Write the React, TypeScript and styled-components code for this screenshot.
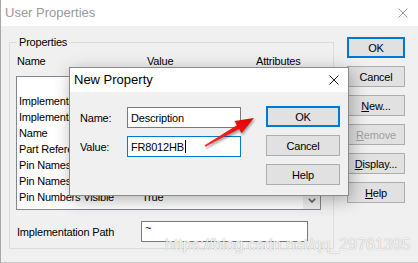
import React from "react";
import styled, { createGlobalStyle, css } from "styled-components";

const GlobalStyle = createGlobalStyle`
	html, body {
		margin: 0;
		padding: 0;
		background: #f0f0f0;
	}
	body {
		font-family: "Liberation Sans", Arial, sans-serif;
		font-size: 11px;
		letter-spacing: -0.2px;
		color: #000;
	}
`;

type PropertyRow = { name: string; value?: string };

const rows: PropertyRow[] = [
	{ name: "" },
	{ name: "Implementation" },
	{ name: "Implementation" },
	{ name: "Name" },
	{ name: "Part Reference" },
	{ name: "Pin Names" },
	{ name: "Pin Names" },
	{ name: "Pin Numbers Visible", value: "True" },
];

const CloseGlyph: React.FC<{ color: string }> = ({ color }) => (
	<CloseSvg viewBox="0 0 10 10" width={10} height={10}>
		<path d="M0.5 0.5 L9.5 9.5 M9.5 0.5 L0.5 9.5" stroke={color} strokeWidth={1} fill="none" />
	</CloseSvg>
);

const RedArrow: React.FC = () => (
	<ArrowSvg viewBox="0 0 60 40" width={60} height={40}>
		<defs>
			<linearGradient id="arrowFill" x1="0" y1="1" x2="1" y2="0">
				<stop offset="0" stopColor="#ff3030" />
				<stop offset="1" stopColor="#e00000" />
			</linearGradient>
		</defs>
		<polygon
			points="6.4,34.7 40.1,17 42.5,21.2 55,6 35.5,9 37.9,13.2 5.6,33.3"
			fill="url(#arrowFill)"
		/>
	</ArrowSvg>
);

const App: React.FC = () => {
	return (
		<>
			<GlobalStyle />
			<Window>
				<TitleBar>
					<TitleText $inactive>User Properties</TitleText>
					<CloseGlyph color="#9a9a9a" />
				</TitleBar>
				<Client>
					<GroupBox>
						<Legend>Properties</Legend>
						<ColumnHeaders>
							<HeaderCell $width={130}>Name</HeaderCell>
							<HeaderCell $width={109}>Value</HeaderCell>
							<HeaderCell>Attributes</HeaderCell>
						</ColumnHeaders>
						<ListBox>
							<Rows>
								{rows.map((row, i) => (
									<Row key={i}>
										<NameCell>{row.name}</NameCell>
										<span>{row.value ?? ""}</span>
									</Row>
								))}
							</Rows>
							<ScrollBar>
								<ScrollArrow>
									<svg viewBox="0 0 8 5" width={8} height={5}>
										<polyline points="0.8,0.8 4,4 7.2,0.8" stroke="#606060" strokeWidth={1.6} fill="none" />
									</svg>
								</ScrollArrow>
							</ScrollBar>
						</ListBox>
						<PathRow>
							<PathLabel>Implementation Path</PathLabel>
							<PathInput>~</PathInput>
						</PathRow>
					</GroupBox>
					<ButtonColumn>
						<PushButton $default>OK</PushButton>
						<PushButton>Cancel</PushButton>
						<PushButton>
							<u>N</u>ew...
						</PushButton>
						<PushButton $disabled>
							<u>R</u>emove
						</PushButton>
						<PushButton>
							<u>D</u>isplay...
						</PushButton>
						<PushButton>
							<u>H</u>elp
						</PushButton>
					</ButtonColumn>
				</Client>

				<Dialog>
					<DialogTitleBar>
						<TitleText>New Property</TitleText>
						<CloseGlyph color="#1a1a1a" />
					</DialogTitleBar>
					<DialogBody>
						<FormColumn>
							<FieldRow>
								<FieldLabel>Name:</FieldLabel>
								<FieldInput>Description</FieldInput>
							</FieldRow>
							<FieldRow>
								<FieldLabel>Value:</FieldLabel>
								<FieldInput $focused>
									FR8012HB<Caret />
								</FieldInput>
							</FieldRow>
						</FormColumn>
						<DialogButtons>
							<DialogButton $default>OK</DialogButton>
							<DialogButton>Cancel</DialogButton>
							<DialogButton>Help</DialogButton>
						</DialogButtons>
					</DialogBody>
				</Dialog>

				<RedArrow />
				<Watermark>https://blog.csdn.net/qq_29761395</Watermark>
			</Window>
		</>
	);
};

export default App;

const Window = styled.div`
	position: relative;
	width: 418px;
	height: 263px;
	box-sizing: border-box;
	overflow: hidden;
	background: #f0f0f0;
	border-left: 1px solid #a8a8a8;
	border-bottom: 1px solid #c8c8c8;
`;

const TitleBar = styled.div`
	height: 26px;
	background: #fff;
	display: flex;
	align-items: center;
	justify-content: space-between;
	padding: 0 10px 0 4px;
`;

const TitleText = styled.span<{ $inactive?: boolean }>`
	font-size: 13px;
	letter-spacing: 0;
	color: ${(p) => (p.$inactive ? "#999" : "#000")};
	line-height: 16px;
`;

const CloseSvg = styled.svg`
	display: block;
`;

const Client = styled.div`
	display: flex;
	align-items: flex-start;
	padding: 11px 0 0 8px;
`;

const GroupBox = styled.div`
	box-sizing: border-box;
	width: 325px;
	height: 207px;
	margin-top: 5px;
	border: 1px solid #dcdcdc;
`;

const Legend = styled.div`
	width: fit-content;
	margin: -7px 0 0 7px;
	padding: 0 2px;
	line-height: 13px;
	background: #f0f0f0;
`;

const ColumnHeaders = styled.div`
	display: flex;
	margin-top: 6px;
	padding-left: 7px;
	line-height: 13px;
`;

const HeaderCell = styled.span<{ $width?: number }>`
	${(p) =>
		p.$width &&
		css`
			width: ${p.$width}px;
		`}
	flex: none;
`;

const ListBox = styled.div`
	box-sizing: border-box;
	display: flex;
	width: 305px;
	height: 134px;
	margin: 8px 0 0 6px;
	border: 1px solid #828790;
	background: #fff;
`;

const Rows = styled.div`
	flex: 1;
	padding-left: 2px;
`;

const Row = styled.div`
	display: grid;
	grid-template-columns: 123px 1fr;
	height: 16px;
	line-height: 16px;
	white-space: nowrap;
`;

const NameCell = styled.span`
	overflow: hidden;
`;

const ScrollBar = styled.div`
	width: 17px;
	background: #f0f0f0;
	display: flex;
	flex-direction: column;
	justify-content: flex-end;
`;

const ScrollArrow = styled.div`
	height: 17px;
	display: flex;
	align-items: center;
	justify-content: center;
`;

const PathRow = styled.div`
	display: flex;
	align-items: center;
	margin-top: 11px;
	padding-left: 7px;
`;

const PathLabel = styled.span`
	width: 124px;
	flex: none;
`;

const inputBox = css`
	box-sizing: border-box;
	background: #fff;
	border: 1px solid #7a7a7a;
	white-space: nowrap;
`;

const PathInput = styled.div`
	${inputBox}
	width: 167px;
	height: 21px;
	padding: 0 3px;
	line-height: 12px;
`;

const ButtonColumn = styled.div`
	display: flex;
	flex-direction: column;
	gap: 8px;
	margin-left: 13px;
	width: 58px;
`;

const buttonFace = css<{ $default?: boolean; $disabled?: boolean }>`
	box-sizing: border-box;
	height: 21px;
	display: flex;
	align-items: center;
	justify-content: center;
	background: #e1e1e1;
	border: ${(p) => (p.$default ? "2px solid #0078d7" : "1px solid #adadad")};
	color: ${(p) => (p.$disabled ? "#a0a0a0" : "#000")};
	white-space: nowrap;
`;

const PushButton = styled.div<{ $default?: boolean; $disabled?: boolean }>`
	${buttonFace}
`;

const Dialog = styled.div`
	position: absolute;
	left: 68px;
	top: 67px;
	width: 280px;
	height: 129px;
	box-sizing: border-box;
	border: 1px solid #8a8a8a;
	background: #f0f0f0;
	box-shadow: 2px 4px 16px rgba(0, 0, 0, 0.3);
`;

const DialogTitleBar = styled.div`
	height: 24px;
	background: #fff;
	display: flex;
	align-items: center;
	justify-content: space-between;
	padding: 0 9px 0 4px;
`;

const DialogBody = styled.div`
	display: flex;
	align-items: flex-start;
	padding: 14px 0 0 10px;
`;

const FormColumn = styled.div`
	display: flex;
	flex-direction: column;
	gap: 8px;
	margin-top: 1px;
`;

const FieldRow = styled.div`
	display: flex;
	align-items: center;
`;

const FieldLabel = styled.span`
	width: 47px;
	flex: none;
`;

const FieldInput = styled.div<{ $focused?: boolean }>`
	${inputBox}
	width: 114px;
	height: 21px;
	padding-left: 3px;
	display: flex;
	align-items: center;
	border-color: ${(p) => (p.$focused ? "#0078d7" : "#7a7a7a")};
`;

const Caret = styled.span`
	display: inline-block;
	width: 1px;
	height: 13px;
	background: #000;
	margin-left: 1px;
`;

const DialogButtons = styled.div`
	display: flex;
	flex-direction: column;
	gap: 8px;
	margin-left: 25px;
	width: 74px;
`;

const DialogButton = styled.div<{ $default?: boolean }>`
	${buttonFace}
`;

const ArrowSvg = styled.svg`
	position: absolute;
	left: 198px;
	top: 112px;
	filter: drop-shadow(1px 2px 1px rgba(0, 0, 0, 0.35));
`;

const Watermark = styled.div`
	position: absolute;
	left: 164px;
	top: 236px;
	font-size: 16px;
	letter-spacing: 0;
	line-height: 18px;
	color: rgba(255, 255, 255, 0.9);
	text-shadow: 0 0 1px rgba(0, 0, 0, 0.4);
	white-space: nowrap;
	pointer-events: none;
`;
